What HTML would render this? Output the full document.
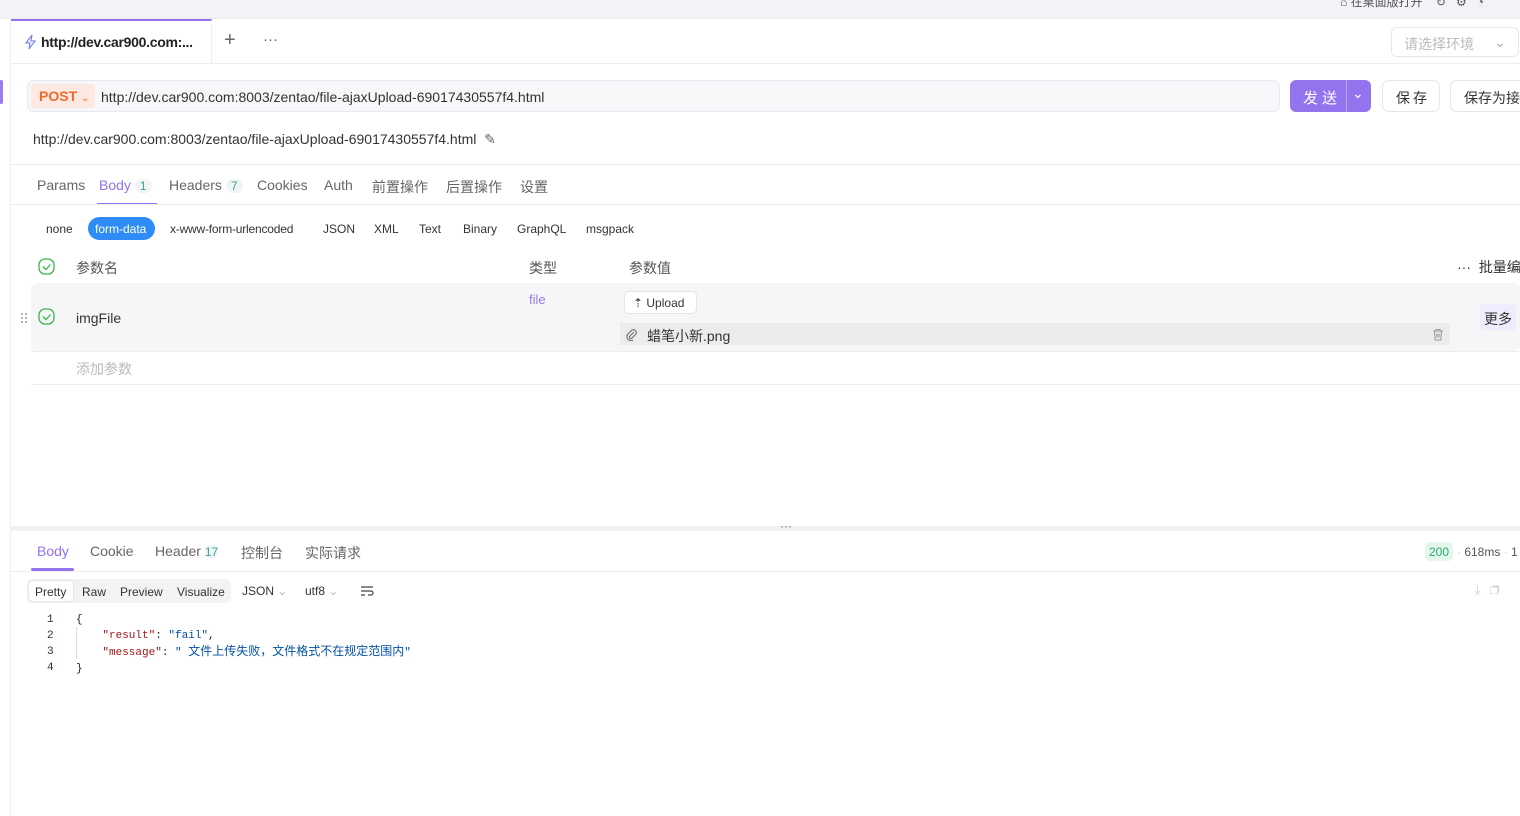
<!DOCTYPE html><html><head><meta charset="utf-8"><style>
*{box-sizing:border-box;margin:0;padding:0}
body{width:1520px;height:816px;overflow:hidden;background:#fff;font-family:"Liberation Sans","Noto Sans CJK SC",sans-serif;color:#333;position:relative;font-size:13px}
.a{position:absolute;white-space:nowrap}
</style></head><body>
<div class="a" style="left:0;top:0;width:1520px;height:19px;background:#f2f3f7;border-bottom:1px solid #e8e8ee"></div>
<div class="a" style="left:1340px;top:-7px;font-size:12px;color:#555">⌂ 在桌面版打开 &nbsp;&nbsp; ↻ &nbsp; ⚙ &nbsp; ◔</div>
<div class="a" style="left:10px;top:19px;width:1px;height:797px;background:#eee"></div>
<div class="a" style="left:0;top:80px;width:3px;height:24px;background:#9b7bf0;border-radius:0 2px 2px 0"></div>
<div class="a" style="left:11px;top:19px;width:201px;height:44px;border-top:2px solid #9373ee;border-right:1px solid #eee;background:#fff"></div>
<div class="a" style="left:11px;top:63px;width:1509px;height:1px;background:#eee"></div>
<svg class="a" style="left:24px;top:34px" width="12" height="16"><path d="M8 1L2 9h4l-1 6 6-8H7z" fill="none" stroke="#7b86f0" stroke-width="1.2"/></svg>
<div class="a" style="left:41px;top:34px;font-size:14px;color:#222;font-weight:bold;letter-spacing:-0.3px">http://dev.car900.com:...</div>
<div class="a" style="left:224px;top:29px;font-size:20px;color:#666">+</div>
<div class="a" style="left:263px;top:31px;font-size:15px;color:#666">···</div>
<div class="a" style="left:1391px;top:27px;width:128px;height:30px;border:1px solid #e6e6e6;border-radius:6px;color:#bbb;font-size:14px;padding:6px 12px">请选择环境<span style="position:absolute;right:12px;color:#aaa">⌄</span></div>
<div class="a" style="left:27px;top:80px;width:1253px;height:32px;background:#f6f7f9;border:1px solid #e8e9ee;border-radius:7px"></div>
<div class="a" style="left:31px;top:84px;width:64px;height:24px;background:#fde9e1;border-radius:4px;color:#ef6b2d;font-weight:bold;font-size:14px;padding:4px 8px">POST <span style="font-weight:normal;font-size:10px">⌄</span></div>
<div class="a" style="left:101px;top:89px;font-size:14px;color:#333">http://dev.car900.com:8003/zentao/file-ajaxUpload-69017430557f4.html</div>
<div class="a" style="left:1290px;top:80px;width:81px;height:32px;background:#9373ee;border-radius:6px"></div>
<div class="a" style="left:1346px;top:80px;width:1px;height:32px;background:#b7a4f5"></div>
<div class="a" style="left:1303px;top:87px;font-size:15px;color:#fff;letter-spacing:4px">发送</div>
<div class="a" style="left:1352px;top:85px;font-size:14px;color:#fff">⌄</div>
<div class="a" style="left:1382px;top:80px;width:58px;height:32px;border:1px solid #e6e6e6;border-radius:7px;font-size:14px;padding:7px 13px;letter-spacing:3px">保存</div>
<div class="a" style="left:1450px;top:80px;width:80px;height:32px;border:1px solid #e6e6e6;border-radius:7px;font-size:14px;padding:7px 13px">保存为接</div>
<div class="a" style="left:33px;top:131px;font-size:14px;color:#333">http://dev.car900.com:8003/zentao/file-ajaxUpload-69017430557f4.html &nbsp;<span style="color:#666">✎</span></div>
<div class="a" style="left:11px;top:164px;width:1509px;height:1px;background:#eee"></div>
<div class="a" style="left:37px;top:177px;font-size:14px;color:#666">Params</div>
<div class="a" style="left:99px;top:177px;font-size:14px;color:#9373ee">Body <span style="display:inline-block;background:#f2f3f5;border-radius:8px;padding:0 5px;color:#3a9;font-size:12px">1</span></div>
<div class="a" style="left:97px;top:203px;width:60px;height:2px;background:#9373ee"></div>
<div class="a" style="left:169px;top:177px;font-size:14px;color:#666">Headers <span style="display:inline-block;background:#f2f3f5;border-radius:8px;padding:0 5px;color:#3a9;font-size:12px">7</span></div>
<div class="a" style="left:257px;top:177px;font-size:14px;color:#666">Cookies</div>
<div class="a" style="left:324px;top:177px;font-size:14px;color:#666">Auth</div>
<div class="a" style="left:372px;top:177px;font-size:14px;color:#666">前置操作</div>
<div class="a" style="left:446px;top:177px;font-size:14px;color:#666">后置操作</div>
<div class="a" style="left:520px;top:177px;font-size:14px;color:#666">设置</div>
<div class="a" style="left:11px;top:204px;width:1509px;height:1px;background:#eee"></div>
<div class="a" style="left:46px;top:222px;font-size:12px;color:#333">none</div>
<div class="a" style="left:88px;top:217px;width:67px;height:23px;background:#2f8cf6;border-radius:12px;color:#fff;font-size:12px;padding:5px 7px">form-data</div>
<div class="a" style="left:170px;top:222px;font-size:12px;color:#333;letter-spacing:-0.2px">x-www-form-urlencoded</div>
<div class="a" style="left:323px;top:222px;font-size:12px;color:#333">JSON</div>
<div class="a" style="left:374px;top:222px;font-size:12px;color:#333">XML</div>
<div class="a" style="left:419px;top:222px;font-size:12px;color:#333">Text</div>
<div class="a" style="left:463px;top:222px;font-size:12px;color:#333">Binary</div>
<div class="a" style="left:517px;top:222px;font-size:12px;color:#333">GraphQL</div>
<div class="a" style="left:586px;top:222px;font-size:12px;color:#333">msgpack</div>
<svg class="a" style="left:38px;top:258px" width="18" height="18"><rect x="1" y="1" width="15" height="15" rx="6" fill="none" stroke="#3bb34a" stroke-width="1.3"/><path d="M5 8.5l3 3 4.5-5" fill="none" stroke="#3bb34a" stroke-width="1.3"/></svg>
<div class="a" style="left:76px;top:258px;font-size:14px;color:#555">参数名</div>
<div class="a" style="left:529px;top:258px;font-size:14px;color:#555">类型</div>
<div class="a" style="left:629px;top:258px;font-size:14px;color:#555">参数值</div>
<div class="a" style="left:1457px;top:257px;font-size:14px;color:#333">··· &nbsp;批量编</div>
<div class="a" style="left:31px;top:283px;width:1489px;height:68px;background:#f5f6f7;border-radius:6px"></div>
<svg class="a" style="left:20px;top:312px" width="8" height="12"><g fill="#999"><circle cx="2" cy="2" r="1"/><circle cx="6" cy="2" r="1"/><circle cx="2" cy="6" r="1"/><circle cx="6" cy="6" r="1"/><circle cx="2" cy="10" r="1"/><circle cx="6" cy="10" r="1"/></g></svg>
<svg class="a" style="left:38px;top:308px" width="18" height="18"><rect x="1" y="1" width="15" height="15" rx="6" fill="none" stroke="#3bb34a" stroke-width="1.3"/><path d="M5 8.5l3 3 4.5-5" fill="none" stroke="#3bb34a" stroke-width="1.3"/></svg>
<div class="a" style="left:76px;top:310px;font-size:14px;color:#333">imgFile</div>
<div class="a" style="left:529px;top:292px;font-size:13px;color:#9a78ee">file</div>
<div class="a" style="left:624px;top:291px;width:73px;height:23px;background:#fff;border:1px solid #e5e5e5;border-radius:5px;font-size:12px;padding:4px 8px">⇡ Upload</div>
<div class="a" style="left:620px;top:323px;width:830px;height:22px;background:#ebeced"></div>
<svg class="a" style="left:625px;top:327px" width="12" height="14"><path d="M9 5l-4.5 4.5a1.5 1.5 0 0 0 2 2L11 7a3 3 0 0 0-4-4L2.5 7.5a4 4 0 0 0 5.5 5.5" fill="none" stroke="#777" stroke-width="1.2"/></svg>
<div class="a" style="left:647px;top:326px;font-size:14px;color:#333">蜡笔小新.png</div>
<svg class="a" style="left:1432px;top:328px" width="12" height="13"><path d="M1 3h10M4 3V1.5h4V3M2.5 3l.7 9h5.6l.7-9M5 5.5v4M7 5.5v4" fill="none" stroke="#999" stroke-width="1.1"/></svg>
<div class="a" style="left:1480px;top:304px;width:36px;height:26px;background:#f1ecfd;border-radius:3px;font-size:14px;padding:5px 4px">更多</div>
<div class="a" style="left:31px;top:351px;width:1489px;height:1px;background:#eee"></div>
<div class="a" style="left:76px;top:359px;font-size:14px;color:#bbb">添加参数</div>
<div class="a" style="left:31px;top:384px;width:1489px;height:1px;background:#eee"></div>
<div class="a" style="left:11px;top:526px;width:1509px;height:5px;background:#f0f1f4"></div>
<div class="a" style="left:780px;top:519px;font-size:12px;color:#666">···</div>
<div class="a" style="left:37px;top:543px;font-size:14px;color:#9373ee">Body</div>
<div class="a" style="left:31px;top:568px;width:43px;height:3px;background:#9373ee;border-radius:2px"></div>
<div class="a" style="left:90px;top:543px;font-size:14px;color:#666">Cookie</div>
<div class="a" style="left:155px;top:543px;font-size:14px;color:#666">Header <span style="background:#f2f3f5;border-radius:8px;color:#3a9;font-size:12px">17</span></div>
<div class="a" style="left:241px;top:543px;font-size:14px;color:#666">控制台</div>
<div class="a" style="left:305px;top:543px;font-size:14px;color:#666">实际请求</div>
<div class="a" style="left:1425px;top:542px;width:28px;height:19px;background:#e3f7ec;border-radius:5px;color:#2aa86a;font-size:12px;padding:3px 4px">200</div>
<div class="a" style="left:1457px;top:545px;font-size:12px;color:#555"><span style="color:#ccc">·</span> 618ms <span style="color:#ccc">·</span> 1</div>
<div class="a" style="left:11px;top:571px;width:1509px;height:1px;background:#eee"></div>
<div class="a" style="left:27px;top:579px;width:204px;height:24px;background:#f2f3f5;border-radius:5px"></div>
<div class="a" style="left:29px;top:581px;width:44px;height:20px;background:#fff;border-radius:4px;box-shadow:0 0 2px #ccc"></div>
<div class="a" style="left:35px;top:585px;font-size:12px;color:#333">Pretty</div>
<div class="a" style="left:82px;top:585px;font-size:12px;color:#333">Raw</div>
<div class="a" style="left:120px;top:585px;font-size:12px;color:#333">Preview</div>
<div class="a" style="left:177px;top:585px;font-size:12px;color:#333">Visualize</div>
<div class="a" style="left:242px;top:584px;font-size:12px;color:#333">JSON <span style="color:#bbb">⌄</span></div>
<div class="a" style="left:305px;top:584px;font-size:12px;color:#333">utf8 <span style="color:#bbb">⌄</span></div>
<svg class="a" style="left:360px;top:586px" width="14" height="10"><path d="M1 1h12M1 5h10a2 2 0 0 1 0 4H8M1 9h4" fill="none" stroke="#444" stroke-width="1.2"/></svg>
<div class="a" style="left:1475px;top:583px;font-size:12px;color:#ccc">⤓ &nbsp; ❐</div>
<div class="a" style="left:76px;top:627px;width:1px;height:32px;background:#ddd"></div>
<div class="a" style="left:47px;top:612px;font-family:'Liberation Mono','Noto Sans CJK SC',monospace;font-size:11px;line-height:16px;color:#234">1<br>2<br>3<br>4</div>
<div class="a" style="left:76px;top:612px;font-family:'Liberation Mono','Noto Sans CJK SC',monospace;font-size:11px;line-height:16px;color:#222">{<br>&nbsp;&nbsp;&nbsp;&nbsp;<span style="color:#a31515">"result"</span>: <span style="color:#0451a5">"fail"</span>,<br>&nbsp;&nbsp;&nbsp;&nbsp;<span style="color:#a31515">"message"</span>: <span style="color:#0451a5">" <span style="font-size:12px">文件上传失败，文件格式不在规定范围内</span>"</span><br>}</div>
</body></html>
